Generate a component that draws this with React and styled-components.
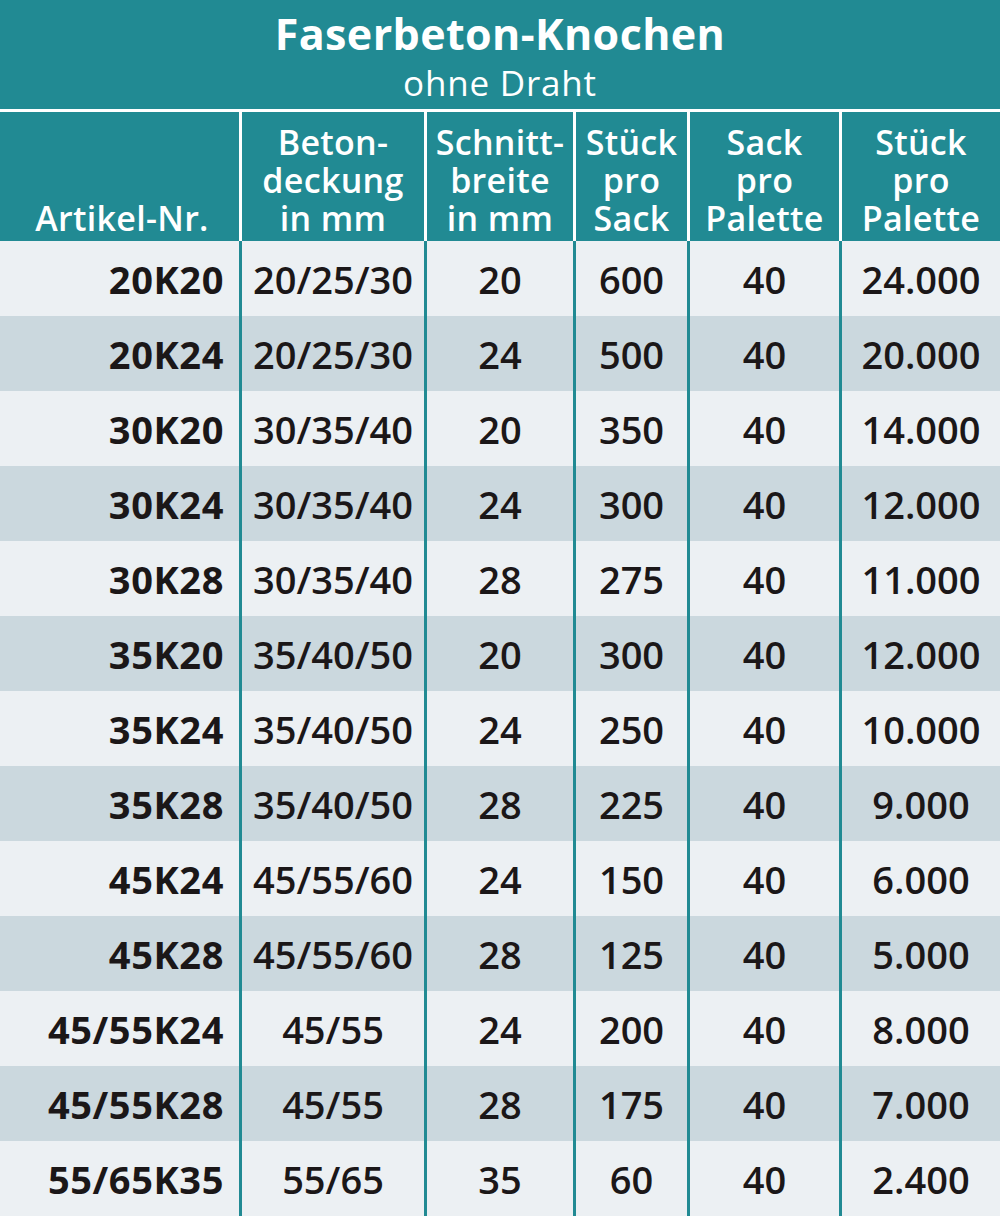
import React from "react";
import styled, { createGlobalStyle } from "styled-components";

const rows = [
  ["20K20", "20/25/30", "20", "600", "40", "24.000"],
  ["20K24", "20/25/30", "24", "500", "40", "20.000"],
  ["30K20", "30/35/40", "20", "350", "40", "14.000"],
  ["30K24", "30/35/40", "24", "300", "40", "12.000"],
  ["30K28", "30/35/40", "28", "275", "40", "11.000"],
  ["35K20", "35/40/50", "20", "300", "40", "12.000"],
  ["35K24", "35/40/50", "24", "250", "40", "10.000"],
  ["35K28", "35/40/50", "28", "225", "40", "9.000"],
  ["45K24", "45/55/60", "24", "150", "40", "6.000"],
  ["45K28", "45/55/60", "28", "125", "40", "5.000"],
  ["45/55K24", "45/55", "24", "200", "40", "8.000"],
  ["45/55K28", "45/55", "28", "175", "40", "7.000"],
  ["55/65K35", "55/65", "35", "60", "40", "2.400"],
];

const headings = [
  ["Artikel-Nr."],
  ["Beton-", "deckung", "in mm"],
  ["Schnitt-", "breite", "in mm"],
  ["Stück", "pro", "Sack"],
  ["Sack", "pro", "Palette"],
  ["Stück", "pro", "Palette"],
];

const GlobalStyle = createGlobalStyle`
  body {
    margin: 0;
    background: #ffffff;
    font-family: "Open Sans", "Noto Sans", sans-serif;
  }
`;

const Table = styled.div`
  width: 1000px;
  display: flex;
  flex-direction: column;
`;

const TitleBar = styled.div`
  height: 109px;
  background: #218a93;
  color: #fff;
  display: flex;
  flex-direction: column;
  align-items: center;
  justify-content: flex-start;
  padding-top: 12px;
  box-sizing: border-box;
`;

const Title = styled.div`
  font-size: 43px;
  font-weight: 700;
  line-height: 44px;
  letter-spacing: 0.4px;
`;

const Subtitle = styled.div`
  font-size: 35px;
  font-weight: 500;
  line-height: 46px;
  letter-spacing: 0.8px;
  margin-top: 4px;
`;

const Row = styled.div`
  display: grid;
  grid-template-columns: 239px 182px 146px 111px 149px 158px;
  column-gap: 3px;
  background: ${(p) => (p.$head ? "#fff" : "#218a93")};
  height: ${(p) => (p.$head ? "129px" : "75px")};
  border-top: ${(p) => (p.$head ? "3px solid #fff" : "none")};
`;

const HeadCell = styled.div`
  background: #218a93;
  color: #fff;
  display: flex;
  flex-direction: column;
  justify-content: flex-end;
  align-items: center;
  text-align: center;
  font-size: 34px;
  font-weight: 600;
  line-height: 38px;
  letter-spacing: 0.3px;
  padding-bottom: 4px;
  padding-left: ${(p) => (p.$first ? "5px" : "0")};
`;

const Cell = styled.div`
  background: ${(p) => (p.$alt ? "#cbd8de" : "#ecf0f3")};
  color: #1b1718;
  display: flex;
  align-items: center;
  justify-content: ${(p) => (p.$first ? "flex-end" : "center")};
  padding-right: ${(p) => (p.$first ? "15px" : "0")};
  font-size: 38px;
  font-weight: ${(p) => (p.$first ? 700 : 600)};
  letter-spacing: ${(p) => (p.$first ? "0.6px" : "0")};
`;

export default function App() {
  return (
    <>
      <GlobalStyle />
      <Table>
        <TitleBar>
          <Title>Faserbeton-Knochen</Title>
          <Subtitle>ohne Draht</Subtitle>
        </TitleBar>
        <Row $head>
          {headings.map((lines, i) => (
            <HeadCell key={i} $first={i === 0}>
              {lines.map((l) => (
                <span key={l}>{l}</span>
              ))}
            </HeadCell>
          ))}
        </Row>
        {rows.map((r, i) => (
          <Row key={r[0]}>
            {r.map((v, j) => (
              <Cell key={j} $alt={i % 2 === 1} $first={j === 0}>
                {v}
              </Cell>
            ))}
          </Row>
        ))}
      </Table>
    </>
  );
}
